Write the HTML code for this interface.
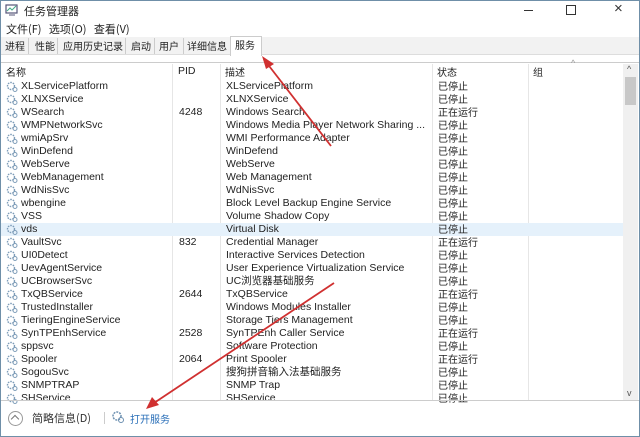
<!DOCTYPE html>
<html><head><meta charset="utf-8"><style>
*{margin:0;padding:0;box-sizing:border-box}
body{width:640px;height:437px;overflow:hidden;background:#fff;font-family:"Liberation Sans","Noto Sans CJK SC",sans-serif;font-size:10.5px;color:#222;position:relative}
.a{position:absolute;white-space:nowrap}
.win{position:absolute;left:0;top:0;width:640px;height:437px;border:1px solid #6f8fa8}
.row{position:absolute;left:1px;width:622px;height:13px;line-height:13px}
.row span{position:absolute;top:0;line-height:13px}
.ic{left:5px;top:1px;width:12px;height:11px;position:absolute}
.n{left:20px}.p{left:178px}.d{left:225px}.s{left:437px}
.cjk{font-family:"Noto Sans CJK SC",sans-serif;font-size:10px}
.row span.s{top:-1px}
</style></head><body>
<div class="win"></div>
<svg class="a" style="left:4px;top:3px" width="16" height="14"><rect x="2" y="2" width="11" height="8" fill="none" stroke="#557" stroke-width="1.2"/><path d="M3 8l3-3 2 2 4-4" stroke="#4a8" fill="none"/><path d="M5 12h6" stroke="#557"/></svg>
<div class="a cjk" style="left:24px;top:3px;font-size:11px">任务管理器</div>
<div class="a" style="left:524px;top:10px;width:9px;height:1px;background:#333"></div>
<div class="a" style="left:566px;top:5px;width:10px;height:10px;border:1px solid #333"></div>
<div class="a" style="left:614px;top:0px;font-size:15px;color:#333">×</div>
<div class="a cjk" style="left:6px;top:21px;font-size:11px">文件(F)&nbsp;&nbsp;&nbsp;选项(O)&nbsp;&nbsp;&nbsp;查看(V)</div>
<div class="a" style="left:1px;top:37px;width:638px;height:18px;background:#f2f2f2;border-bottom:1px solid #ddd"></div>
<div class="a cjk" style="left:5px;top:38px">进程</div>
<div class="a cjk" style="left:35px;top:38px">性能</div>
<div class="a cjk" style="left:63px;top:38px">应用历史记录</div>
<div class="a cjk" style="left:131px;top:38px">启动</div>
<div class="a cjk" style="left:159px;top:38px">用户</div>
<div class="a cjk" style="left:187px;top:38px">详细信息</div>
<div class="a" style="left:28px;top:38px;width:1px;height:16px;background:#ccc"></div>
<div class="a" style="left:57px;top:38px;width:1px;height:16px;background:#ccc"></div>
<div class="a" style="left:125px;top:38px;width:1px;height:16px;background:#ccc"></div>
<div class="a" style="left:154px;top:38px;width:1px;height:16px;background:#ccc"></div>
<div class="a" style="left:183px;top:38px;width:1px;height:16px;background:#ccc"></div>
<div class="a" style="left:230px;top:36px;width:32px;height:20px;background:#fff;border:1px solid #ccc;border-bottom:none"></div>
<div class="a cjk" style="left:235px;top:37px">服务</div>
<div class="a" style="left:1px;top:62px;width:638px;height:1px;background:#ccc"></div>
<div class="a cjk" style="left:6px;top:64px">名称</div>
<div class="a" style="left:178px;top:65px">PID</div>
<div class="a cjk" style="left:225px;top:64px">描述</div>
<div class="a cjk" style="left:437px;top:64px">状态</div>
<div class="a cjk" style="left:533px;top:64px">组</div>
<div class="a" style="left:571px;top:58px;font-size:9px;color:#999">^</div>
<div class="a" style="left:172px;top:64px;width:1px;height:336px;background:#e6e6e6"></div>
<div class="a" style="left:220px;top:64px;width:1px;height:336px;background:#e6e6e6"></div>
<div class="a" style="left:432px;top:64px;width:1px;height:336px;background:#e6e6e6"></div>
<div class="a" style="left:528px;top:64px;width:1px;height:336px;background:#e6e6e6"></div>
<div class="a" style="left:623px;top:64px;width:15px;height:336px;background:#f0f0f0"></div>
<div class="a" style="left:625px;top:77px;width:11px;height:28px;background:#c8c8c8"></div>
<div class="a" style="left:627px;top:64px;font-size:9px;color:#555">^</div>
<div class="a" style="left:627px;top:388px;font-size:9px;color:#555">v</div>
<div class="a" style="left:1px;top:223px;width:622px;height:13px;background:#e5f1fb"></div>
<div id="rows"></div>
<div class="a" style="left:1px;top:400px;width:638px;height:1px;background:#ccc"></div>
<div class="a" style="left:8px;top:411px;width:15px;height:15px;border:1px solid #999;border-radius:50%"></div>
<div class="a" style="left:12px;top:416px;width:6px;height:6px;border-left:1px solid #777;border-top:1px solid #777;transform:rotate(45deg)"></div>
<div class="a cjk" style="left:32px;top:410px;font-size:11px;color:#333">简略信息(D)</div>
<div class="a" style="left:104px;top:412px;width:1px;height:12px;background:#ccc"></div>
<svg class="a" style="left:111px;top:410px" width="14" height="14"><circle cx="6" cy="6" r="4" fill="none" stroke="#6b8fb0" stroke-width="1.5" stroke-dasharray="2 1"/><circle cx="10" cy="10" r="2.5" fill="none" stroke="#6b8fb0"/></svg>
<div class="a cjk" style="left:130px;top:411px;color:#2a6fb8">打开服务</div>
<svg class="a" style="left:0;top:0" width="640" height="437">
<line x1="331" y1="146" x2="266" y2="62" stroke="#d03030" stroke-width="1.8"/>
<polygon points="262,56 274,64 266,69" fill="#d03030"/>
<line x1="334" y1="283" x2="154" y2="403" stroke="#d03030" stroke-width="1.8"/>
<polygon points="146,409 152,397 159,405" fill="#d03030"/>
</svg>
<script>
var d=[["XLServicePlatform","","XLServicePlatform","已停止"],["XLNXService","","XLNXService","已停止"],["WSearch","4248","Windows Search","正在运行"],["WMPNetworkSvc","","Windows Media Player Network Sharing ...","已停止"],["wmiApSrv","","WMI Performance Adapter","已停止"],["WinDefend","","WinDefend","已停止"],["WebServe","","WebServe","已停止"],["WebManagement","","Web Management","已停止"],["WdNisSvc","","WdNisSvc","已停止"],["wbengine","","Block Level Backup Engine Service","已停止"],["VSS","","Volume Shadow Copy","已停止"],["vds","","Virtual Disk","已停止"],["VaultSvc","832","Credential Manager","正在运行"],["UI0Detect","","Interactive Services Detection","已停止"],["UevAgentService","","User Experience Virtualization Service","已停止"],["UCBrowserSvc","","UC浏览器基础服务","已停止"],["TxQBService","2644","TxQBService","正在运行"],["TrustedInstaller","","Windows Modules Installer","已停止"],["TieringEngineService","","Storage Tiers Management","已停止"],["SynTPEnhService","2528","SynTPEnh Caller Service","正在运行"],["sppsvc","","Software Protection","已停止"],["Spooler","2064","Print Spooler","正在运行"],["SogouSvc","","搜狗拼音输入法基础服务","已停止"],["SNMPTRAP","","SNMP Trap","已停止"],["SHService","","SHService","已停止"]];
var h="";d.forEach(function(r,i){h+='<div class="row" style="top:'+(80+i*13)+'px"><svg class="ic" viewBox="0 0 12 11"><circle cx="5" cy="5" r="3.5" fill="none" stroke="#7d9cb8" stroke-width="1.4" stroke-dasharray="1.6 1"/><circle cx="9" cy="8.5" r="2" fill="none" stroke="#7d9cb8"/></svg><span class="n">'+r[0]+'</span><span class="p">'+r[1]+'</span><span class="d">'+r[2]+'</span><span class="s cjk">'+r[3]+'</span></div>'});
document.getElementById("rows").innerHTML=h;
</script>
</body></html>
